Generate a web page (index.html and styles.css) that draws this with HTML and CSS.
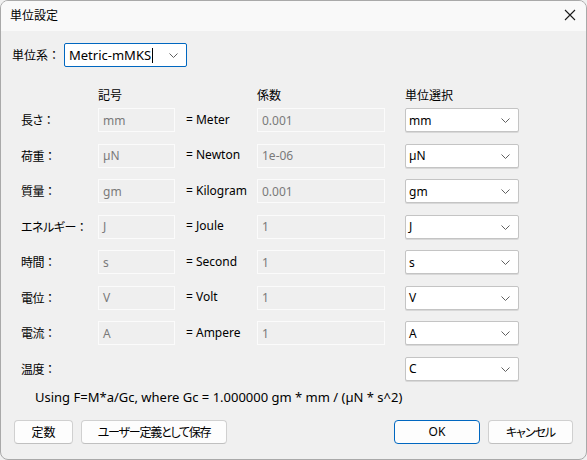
FILE: index.html
```html
<!DOCTYPE html>
<html lang="ja">
<head>
    <meta charset="UTF-8">
    <title>単位設定</title>
    <link rel="stylesheet" href="styles.css">
</head>
<body>
    <div class="dialog">
        <div class="titlebar">
            <span class="title">単位設定</span>
            <svg class="close" width="12" height="12" viewBox="0 0 12 12"><path d="M1 1L11 11M11 1L1 11" stroke="#1a1a1a" stroke-width="1.1" fill="none"/></svg>
        </div>

        <div class="system-row">
            <span class="system-label">単位系：</span>
            <div class="combo focused">
                <span>Metric-mMKS</span><span class="caret"></span>
                <svg class="chevron" width="9" height="5" viewBox="0 0 9 5"><path d="M0.5 0.5L4.5 4.5L8.5 0.5" stroke="#606060" fill="none"/></svg>
            </div>
        </div>

        <div class="unit-grid head">
            <span></span>
            <span class="col-head">記号</span>
            <span></span>
            <span class="col-head">係数</span>
            <span></span>
            <span class="col-head">単位選択</span>
        </div>

        <div class="unit-grid rows" id="rows"></div>

        <p class="formula">Using F=M*a/Gc, where Gc = 1.000000 gm * mm / (µN * s^2)</p>

        <div class="button-bar">
            <button class="btn btn-const">定数</button>
            <button class="btn btn-save">ユーザー定義として保存</button>
            <span class="spacer"></span>
            <button class="btn btn-ok">OK</button>
            <button class="btn btn-cancel">キャンセル</button>
        </div>
    </div>

    <script>
        const units = [
            { label: '長さ', sym: 'mm', name: '= Meter', coef: '0.001', sel: 'mm' },
            { label: '荷重', sym: 'µN', name: '= Newton', coef: '1e-06', sel: 'µN' },
            { label: '質量', sym: 'gm', name: '= Kilogram', coef: '0.001', sel: 'gm' },
            { label: 'エネルギー', sym: 'J', name: '= Joule', coef: '1', sel: 'J' },
            { label: '時間', sym: 's', name: '= Second', coef: '1', sel: 's' },
            { label: '電位', sym: 'V', name: '= Volt', coef: '1', sel: 'V' },
            { label: '電流', sym: 'A', name: '= Ampere', coef: '1', sel: 'A' },
            { label: '温度', sym: null, name: '', coef: null, sel: 'C' }
        ];
        const chevron = '<svg class="chevron" width="9" height="5" viewBox="0 0 9 5"><path d="M0.5 0.5L4.5 4.5L8.5 0.5" stroke="#606060" fill="none"/></svg>';
        const rows = document.getElementById('rows');
        units.forEach(u => {
            rows.innerHTML += `
                <span class="row-label">${u.label}<span class="colon">：</span></span>
                ${u.sym !== null ? `<span class="field">${u.sym}</span>` : '<span></span>'}
                <span class="unit-name">${u.name}</span>
                ${u.coef !== null ? `<span class="field">${u.coef}</span>` : '<span></span>'}
                <span></span>
                <div class="combo">${u.sel}${chevron}</div>
            `;
        });
    </script>
</body>
</html>
```

FILE: styles.css
```css
body {
    margin: 0;
    background: #f0f0f0;
    font-family: 'Noto Sans', 'Noto Sans CJK JP', sans-serif;
    font-size: 12px;
    color: #000000;
}

.dialog {
    width: 587px;
    height: 460px;
    box-sizing: border-box;
    border: 1px solid #a9a9a9;
    border-radius: 8px;
    background: #f0f0f0;
    overflow: hidden;
    display: flex;
    flex-direction: column;
}

.titlebar {
    height: 30px;
    background: #f9f9f9;
    display: flex;
    align-items: center;
    justify-content: space-between;
    padding: 0 10px 0 9px;
}

.title {
    font-size: 12px;
    margin-top: -2px;
}

.close {
    margin-top: -2px;
}

.system-row {
    display: flex;
    align-items: center;
    margin-top: 12px;
    padding-left: 11px;
}

.system-label {
    width: 52px;
}

.combo {
    position: relative;
    height: 24px;
    box-sizing: border-box;
    background: #ffffff;
    border: 1px solid #c4c4c4;
    border-radius: 2px;
    box-shadow: 0 1px 0 #d8d8d8;
    display: flex;
    align-items: center;
    padding-left: 3px;
    font-size: 12px;
}

.combo .chevron {
    position: absolute;
    right: 8px;
    top: 9px;
}

.combo.focused {
    width: 123px;
    border: 1px solid #0067c0;
    box-shadow: none;
    padding-left: 4px;
    font-size: 13px;
}

.caret {
    display: inline-block;
    width: 1px;
    height: 15px;
    background: #000000;
    margin-left: 1px;
}

.unit-grid {
    display: grid;
    grid-template-columns: 78px 77px 82px 128px 20px 114px;
    padding-left: 19px;
}

.head {
    margin-top: 19px;
    height: 18px;
    align-items: center;
}

.rows {
    margin-top: 4px;
    grid-auto-rows: 24px;
    row-gap: 11.5px;
    align-items: center;
}

.row-label {
    padding-left: 1px;
    font-feature-settings: "palt";
    letter-spacing: -0.5px;
}

.colon {
    font-feature-settings: normal;
    letter-spacing: 0;
}

.field {
    height: 24px;
    box-sizing: border-box;
    border: 1px solid #fbfbfb;
    background: #efefef;
    color: #7a7a7a;
    display: flex;
    align-items: center;
    padding-left: 4px;
}

.unit-name {
    padding-left: 11px;
    margin-top: -2px;
}

.formula {
    margin: 7px 0 0 34px;
    height: 18px;
    line-height: 18px;
    font-size: 13px;
}

.button-bar {
    display: flex;
    align-items: center;
    gap: 8px;
    margin-top: 14px;
    padding: 0 13px 0 13px;
}

.spacer {
    flex: 1;
}

.btn {
    height: 24px;
    box-sizing: border-box;
    background: #fdfdfd;
    border: 1px solid #d0d0d0;
    border-bottom-color: #c0c0c0;
    border-radius: 4px;
    font-family: inherit;
    font-feature-settings: "palt";
    font-size: 12px;
    color: #000000;
    padding: 0;
}

.btn-const {
    width: 59px;
}

.btn-save {
    width: 146px;
    letter-spacing: -1.2px;
}

.btn-ok {
    width: 86px;
    border: 1px solid #0067c0;
}

.btn-cancel {
    width: 85px;
    letter-spacing: -1px;
}
```
